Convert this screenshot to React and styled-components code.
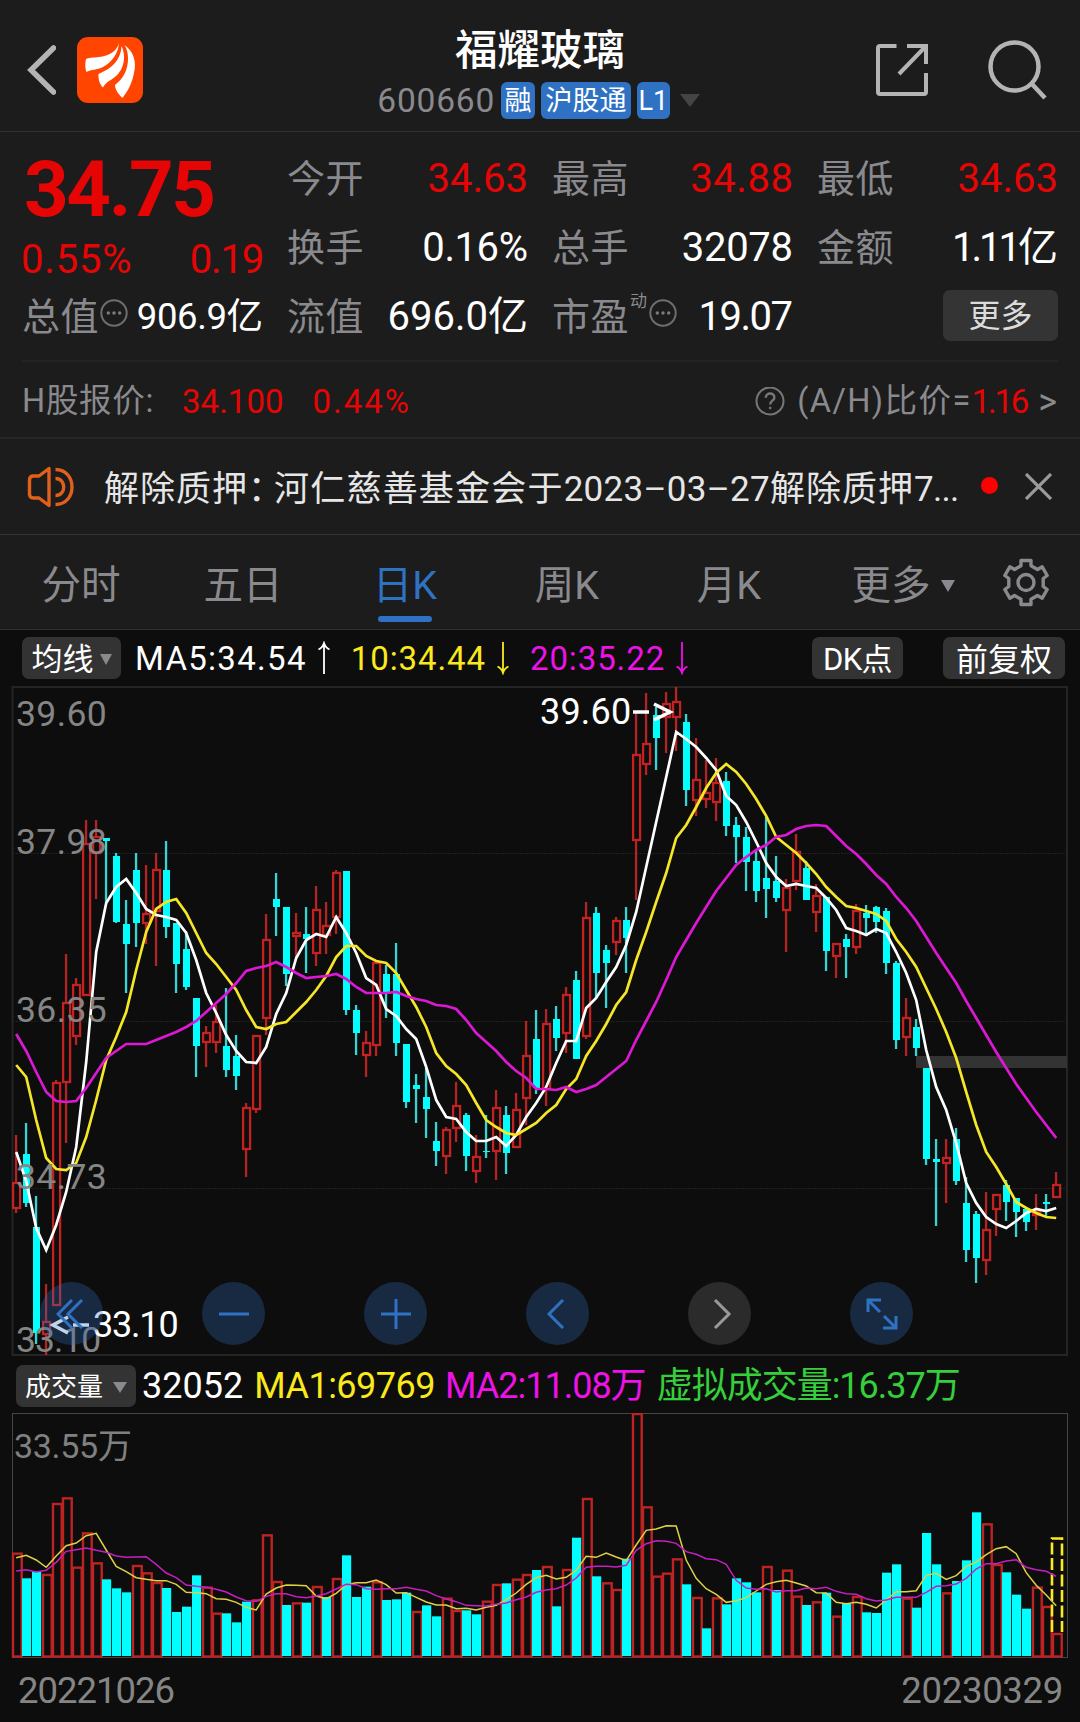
import styled, { createGlobalStyle } from "styled-components";

const GlobalStyle = createGlobalStyle`
  * {
    box-sizing: border-box;
  }
  body {
    margin: 0;
    background: #0d0d0d;
  }
  svg {
    display: block;
    flex-shrink: 0;
  }
`;

const RED = "#e60505";
const YELLOW = "#fbe91c";
const MAGENTA = "#ee12e6";
const GREEN = "#35cf3b";
const GRAY = "#8a8a8e";
const BLUE = "#2f72c4";

const Page = styled.div`
  width: 1080px;
  height: 1722px;
  overflow: hidden;
  background: #1c1c1c;
  color: #fff;
  font-family: Roboto, "Noto Sans CJK SC", sans-serif;
  font-size: 38px;
  line-height: 1;
  white-space: nowrap;
`;

const Text = styled.span`
  font-size: ${(props) => props.$size || 38}px;
  color: ${(props) => props.$color || "#fff"};
  letter-spacing: ${(props) => props.$ls || 0}px;
  margin-left: ${(props) => props.$ml || 0}px;
`;

/* header */

const Header = styled.header`
  display: grid;
  grid-template-columns: 340px 1fr 340px;
  height: 132px;
  border-bottom: 1px solid #303030;
`;

const HeaderLeft = styled.div`
  display: flex;
  align-items: center;
  gap: 21px;
  padding: 8px 0 0 26px;
`;

const HeaderRight = styled.div`
  display: flex;
  align-items: center;
  justify-content: flex-end;
  gap: 59px;
  padding: 8px 32px 0 0;
`;

const Logo = styled.div`
  width: 66px;
  height: 66px;
  border-radius: 11px;
  background: #ff4500;
`;

const TitleBlock = styled.div`
  display: flex;
  flex-direction: column;
  align-items: center;
  padding-top: 26px;
`;

const Title = styled.h1`
  margin: 0;
  font-size: 42.5px;
  font-weight: 500;
  line-height: 50px;
`;

const SubTitle = styled.div`
  display: flex;
  align-items: center;
  height: 37px;
  margin-top: 6px;
  padding-right: 3px;
`;

const Badge = styled.span`
  height: 37px;
  margin-left: 6px;
  padding: 0 ${(props) => props.$pad}px;
  border-radius: 6px;
  background: ${BLUE};
  font-size: 27px;
  line-height: 39px;
`;

const Triangle = styled.i`
  width: 0;
  height: 0;
  margin-left: ${(props) => props.$ml || 0}px;
  border-left: ${(props) => props.$w / 2}px solid transparent;
  border-right: ${(props) => props.$w / 2}px solid transparent;
  border-top: ${(props) => props.$h}px solid ${(props) => props.$color || GRAY};
`;

/* quote */

const Quote = styled.section`
  display: grid;
  grid-template-columns: repeat(4, 240px);
  grid-template-rows: repeat(3, 69px);
  column-gap: 25px;
  height: 230px;
  margin: 0 22px;
  padding: 11px 0 0 1px;
  border-bottom: 2px solid #242424;
`;

const PriceCell = styled.div`
  grid-row: span 2;
  color: ${RED};
`;

const Price = styled.div`
  font-size: 78px;
  font-weight: 700;
  line-height: 94px;
  letter-spacing: -2.4px;
  margin-left: 1px;
`;

const Change = styled.div`
  display: flex;
  justify-content: space-between;
  margin-left: -2px;
  line-height: 46px;
`;

const Cell = styled.div`
  display: flex;
  align-items: center;
  padding-top: 3px;
`;

const Label = styled.span`
  margin-left: -1px;
  color: ${GRAY};
  font-size: 38px;
  letter-spacing: 0.5px;
`;

const Value = styled.span`
  margin-left: auto;
  margin-right: ${(props) => -(props.$ls || 0)}px;
  color: ${(props) => (props.$up ? RED : "#fff")};
  font-size: ${(props) => props.$size || 40}px;
  letter-spacing: ${(props) => props.$ls || 0}px;
`;

const Sup = styled.sup`
  align-self: flex-start;
  margin: 4px 2px 0 1px;
  color: ${GRAY};
  font-size: 17px;
  line-height: 26px;
`;

const MoreButton = styled.button`
  width: 115px;
  height: 51px;
  margin: -4px 0 0 auto;
  padding: 2px 0 0;
  border: 0;
  border-radius: 7px;
  background: #343434;
  color: #dcdcdc;
  font-family: inherit;
  font-size: 32px;
  line-height: 1;
`;

const HShare = styled.section`
  display: flex;
  align-items: center;
  height: 77px;
  padding: 4px 23px 0 22px;
  border-bottom: 2px solid #262626;
`;

const Push = styled.div`
  flex: 1;
`;

const Notice = styled.section`
  display: flex;
  align-items: center;
  height: 96px;
  padding: 0 28px 0 27px;
  border-bottom: 1px solid #333;
`;

const NoticeText = styled.div`
  padding: 3px 0 0 29px;
`;

const RedDot = styled.i`
  width: 17px;
  height: 17px;
  margin: 0 27px 2px auto;
  border-radius: 50%;
  background: #ff0000;
`;

/* tabs */

const Tabs = styled.nav`
  display: grid;
  grid-template-columns: repeat(6, 162px) 108px;
  height: 95px;
  border-bottom: 1px solid #303030;
`;

const Tab = styled.div`
  position: relative;
  display: flex;
  align-items: center;
  justify-content: center;
  padding: ${(props) => (props.$icon ? 2 : 7)}px 0 0 ${(props) => (props.$drop ? 24 : 0)}px;
  color: ${(props) => (props.$active ? BLUE : GRAY)};
  font-size: 39.5px;

  &::after {
    content: "";
    display: ${(props) => (props.$active ? "block" : "none")};
    position: absolute;
    left: 54px;
    bottom: 7px;
    width: 54px;
    height: 6px;
    border-radius: 3px;
    background: ${BLUE};
  }
`;

/* charts */

const Charts = styled.main`
  height: 1092px;
  background: #0d0d0d;
`;

const Legend = styled.div`
  display: flex;
  align-items: center;
  height: ${(props) => props.$h}px;
  padding: ${(props) => props.$pad};
`;

const Chip = styled.button`
  display: flex;
  align-items: center;
  justify-content: center;
  width: ${(props) => props.$w}px;
  height: 42px;
  margin-left: ${(props) => props.$ml || 0}px;
  padding: 3px 0 0;
  border: 0;
  border-radius: 7px;
  background: #333;
  color: #fff;
  font-family: inherit;
  font-size: ${(props) => props.$size || 31}px;
  line-height: 1;
  letter-spacing: ${(props) => props.$ls || 0}px;
`;

const ChartBox = styled.div`
  position: relative;
`;

const Controls = styled.div`
  position: absolute;
  left: 40px;
  bottom: 11px;
  display: flex;
  gap: 99px;
`;

const RoundButton = styled.button`
  display: flex;
  align-items: center;
  justify-content: center;
  width: 63px;
  height: 63px;
  padding: 0;
  border: 0;
  border-radius: 50%;
  background: ${(props) =>
    props.$muted ? "rgba(113, 113, 113, 0.3)" : "rgba(49, 110, 190, 0.3)"};
  color: ${(props) => (props.$muted ? "#999" : BLUE)};
`;

const Dates = styled.footer`
  display: flex;
  justify-content: space-between;
  padding: 14px 17px 0 18px;
`;

// [up, high, body top, body bottom, low]
const candles = [
  [1, 1135, 1182, 1209, 1213], [0, 1123, 1154, 1203, 1207], [0, 1196, 1227, 1333, 1344],
  [1, 1284, 1321, 1335, 1355], [1, 1080, 1082, 1306, 1306], [1, 954, 1002, 1083, 1143],
  [1, 978, 984, 1037, 1045], [1, 820, 843, 996, 996], [1, 820, 836, 854, 899],
  [0, 838, 838, 841, 902], [0, 853, 856, 922, 923], [0, 900, 924, 944, 993],
  [0, 853, 870, 923, 947], [1, 865, 913, 924, 944], [1, 853, 869, 912, 966],
  [0, 841, 870, 927, 938], [0, 923, 923, 964, 993], [0, 931, 949, 987, 990],
  [0, 998, 998, 1046, 1077], [1, 1026, 1032, 1043, 1067], [1, 1005, 1021, 1043, 1053],
  [0, 988, 1046, 1070, 1077], [0, 1035, 1056, 1076, 1090], [1, 1103, 1107, 1150, 1177],
  [1, 1035, 1035, 1110, 1113], [1, 914, 939, 1019, 1035], [0, 873, 899, 907, 936],
  [0, 907, 907, 974, 986], [1, 913, 932, 937, 957], [0, 907, 934, 939, 973],
  [1, 886, 909, 954, 966], [1, 902, 925, 936, 954], [1, 870, 872, 918, 934],
  [0, 871, 871, 1010, 1015], [0, 1005, 1010, 1033, 1055], [1, 1031, 1042, 1056, 1077],
  [1, 962, 962, 1046, 1056], [0, 965, 974, 992, 1018], [0, 943, 974, 1043, 1056],
  [0, 1044, 1044, 1102, 1108], [0, 1074, 1085, 1089, 1123], [0, 1068, 1097, 1109, 1138],
  [0, 1122, 1141, 1151, 1166], [1, 1127, 1129, 1157, 1174], [1, 1082, 1105, 1129, 1142],
  [0, 1113, 1115, 1156, 1171], [1, 1135, 1156, 1172, 1183], [0, 1115, 1151, 1152, 1158],
  [1, 1090, 1107, 1152, 1180], [0, 1106, 1115, 1153, 1174], [1, 1093, 1109, 1148, 1148],
  [1, 1021, 1055, 1099, 1125], [0, 1010, 1039, 1088, 1094], [1, 1009, 1023, 1090, 1106],
  [0, 1006, 1019, 1038, 1051], [1, 987, 994, 1034, 1053], [0, 971, 980, 1059, 1059],
  [1, 902, 917, 1037, 1039], [0, 907, 913, 973, 998], [0, 945, 950, 963, 1008],
  [1, 917, 920, 943, 955], [0, 907, 920, 938, 973], [1, 712, 754, 841, 900],
  [1, 693, 743, 765, 775], [0, 707, 715, 738, 770], [1, 692, 703, 718, 753],
  [1, 687, 701, 718, 751], [0, 714, 722, 790, 806], [1, 738, 779, 801, 816],
  [1, 760, 792, 800, 808], [1, 758, 782, 803, 821], [0, 772, 781, 826, 836],
  [0, 817, 825, 837, 863], [0, 827, 837, 862, 891], [0, 850, 861, 891, 902],
  [0, 817, 878, 889, 918], [0, 856, 881, 898, 902], [1, 879, 887, 911, 952],
  [1, 834, 851, 882, 890], [0, 861, 868, 900, 900], [1, 884, 895, 913, 932],
  [0, 897, 897, 951, 971], [1, 943, 943, 957, 978], [0, 934, 939, 947, 978],
  [1, 904, 910, 948, 954], [0, 905, 913, 918, 935], [0, 906, 907, 922, 933],
  [0, 908, 911, 963, 974], [0, 961, 963, 1040, 1049], [1, 998, 1017, 1038, 1056],
  [0, 1019, 1027, 1048, 1056], [0, 1068, 1068, 1159, 1165], [0, 1139, 1159, 1162, 1226],
  [1, 1139, 1157, 1164, 1203], [0, 1128, 1139, 1181, 1185], [0, 1177, 1203, 1250, 1262],
  [0, 1211, 1214, 1258, 1283], [1, 1192, 1229, 1261, 1275], [1, 1194, 1194, 1210, 1236],
  [0, 1180, 1185, 1202, 1221], [0, 1198, 1198, 1212, 1237], [0, 1209, 1209, 1222, 1231],
  [1, 1194, 1211, 1216, 1230], [0, 1194, 1202, 1204, 1217], [1, 1172, 1184, 1198, 1198],
];

const ma5 = [
  1152, 1181, 1228, 1250, 1225, 1192, 1147, 1062, 952, 903, 887, 879, 893, 909, 915, 917, 920,
  933, 960, 993, 1013, 1035, 1051, 1062, 1063, 1047, 1014, 993, 958, 940, 934, 937, 917, 933,
  953, 978, 985, 1009, 1016, 1029, 1039, 1067, 1100, 1117, 1119, 1132, 1141, 1141, 1137, 1146,
  1135, 1117, 1103, 1087, 1063, 1041, 1041, 1008, 998, 982, 967, 945, 912, 867, 822, 777, 732,
  739, 747, 758, 770, 796, 805, 822, 842, 863, 877, 886, 884, 886, 888, 898, 910, 928, 931, 935,
  929, 933, 952, 973, 1000, 1050, 1087, 1110, 1143, 1183, 1203, 1217, 1224, 1228, 1221, 1213,
  1209, 1211, 1208,
];

const ma10 = [
  1065, 1077, 1120, 1158, 1169, 1170, 1163, 1137, 1100, 1060, 1037, 1012, 970, 932, 909, 902,
  899, 913, 933, 953, 964, 977, 990, 1010, 1027, 1029, 1024, 1022, 1012, 1002, 990, 976, 957,
  946, 946, 956, 961, 963, 973, 990, 1007, 1027, 1053, 1066, 1074, 1085, 1103, 1120, 1127, 1133,
  1135, 1129, 1123, 1113, 1105, 1089, 1079, 1056, 1041, 1024, 1005, 992, 960, 932, 902, 873,
  838, 825, 807, 788, 773, 764, 772, 784, 799, 816, 837, 845, 853, 863, 874, 887, 897, 906, 908,
  911, 914, 921, 939, 952, 967, 988, 1009, 1032, 1058, 1092, 1125, 1152, 1167, 1184, 1202, 1208,
  1213, 1217, 1218,
];

const ma20 = [
  1034, 1051, 1072, 1092, 1101, 1102, 1101, 1088, 1073, 1058, 1051, 1044, 1044, 1044, 1040,
  1036, 1032, 1027, 1021, 1012, 1003, 994, 983, 971, 968, 966, 962, 967, 973, 978, 977, 976,
  974, 979, 987, 993, 993, 993, 992, 996, 999, 1001, 1005, 1006, 1009, 1020, 1033, 1042, 1051,
  1062, 1071, 1078, 1089, 1089, 1090, 1087, 1092, 1089, 1085, 1077, 1069, 1061, 1040, 1021,
  1002, 980, 957, 940, 923, 907, 891, 878, 865, 857, 850, 845, 837, 835, 829, 826, 825, 826,
  836, 846, 854, 864, 875, 884, 897, 908, 921, 937, 953, 968, 983, 1001, 1018, 1035, 1052, 1068,
  1084, 1098, 1112, 1125, 1138,
];

// the volume series count down from the top of the panel, three units a pixel
const volumes = [
  608, 685, 665, 672, 459, 442, 650, 547, 637, 688, 715, 727, 645, 667, 696, 714, 786, 770, 676,
  710, 788, 790, 817, 755, 748, 553, 693, 765, 757, 758, 708, 741, 684, 616, 741, 710, 694, 750,
  748, 728, 783, 766, 799, 743, 780, 781, 793, 752, 702, 700, 686, 672, 660, 648, 769, 657, 563,
  444, 679, 697, 717, 626, 189, 469, 677, 668, 625, 703, 741, 835, 742, 763, 685, 697, 727, 648,
  720, 659, 737, 765, 754, 728, 797, 762, 738, 787, 789, 668, 643, 743, 773, 549, 643, 727, 693,
  631, 487, 520, 642, 667, 734, 776, 710, 768, 849,
];

// close against the previous close: r is up, c is down
const volumeSides =
  "rccrrrrrrc" +
  "ccrrrccccr" +
  "rcccrrrcrc" +
  "rcrcccrccc" +
  "rccrrccrrc" +
  "rrcrcrcrcr" +
  "rcrrrrrcrc" +
  "rccccrcrrc" +
  "rcrcrccccr" +
  "cccrcccrrc" +
  "ccrrr";

const volMa1 = [
  623, 616, 630, 652, 618, 587, 579, 557, 550, 600, 649, 665, 683, 688, 692, 692, 703, 727, 728,
  731, 746, 748, 757, 772, 780, 732, 714, 705, 706, 707, 738, 746, 730, 704, 698, 698, 690, 704,
  729, 728, 742, 756, 765, 765, 776, 775, 780, 772, 766, 749, 729, 703, 683, 676, 687, 682, 661,
  619, 622, 609, 621, 632, 585, 541, 537, 527, 528, 630, 685, 716, 733, 757, 752, 743, 723, 703,
  695, 691, 699, 708, 728, 729, 757, 761, 757, 763, 774, 750, 725, 725, 722, 676, 670, 688, 677,
  649, 636, 614, 596, 590, 611, 668, 706, 735, 767,
];

const volMa2 = [
  663, 659, 666, 661, 637, 604, 599, 594, 601, 607, 618, 622, 621, 620, 643, 669, 683, 705, 709,
  712, 718, 726, 741, 752, 754, 739, 731, 731, 740, 743, 738, 731, 717, 703, 704, 716, 718, 716,
  716, 712, 718, 723, 737, 747, 755, 766, 767, 768, 763, 759, 749, 741, 727, 720, 716, 705, 684,
  652, 649, 649, 651, 646, 601, 581, 572, 574, 580, 605, 613, 626, 629, 643, 691, 714, 718, 716,
  726, 722, 722, 714, 716, 712, 724, 731, 733, 746, 753, 750, 742, 742, 742, 727, 709, 707, 702,
  685, 657, 641, 641, 633, 629, 652, 659, 664, 679,
];

const volY = (v) => 1350 + v / 3;

const toPoints = (series, fn = (v) => v) =>
  series.map((v, i) => `${16.2 + i * 10},${fn(v)}`).join(" ");

const Candle = ({ index, data }) => {
  const [up, high, top, bottom, low] = data;
  const x = 16 + index * 10;
  return (
    <g>
      <rect x={x - 1.1} y={high} width="2.3" height={low - high} fill={up ? "#b52424" : "#38d4d4"} />
      {up ? (
        <rect
          x={x - 2.9}
          y={top + 1}
          width="7"
          height={Math.max(bottom - top - 2, 1)}
          fill="#0d0d0d"
          stroke="#c42121"
          strokeWidth="2.3"
        />
      ) : (
        <rect x={x - 3} y={top} width="7" height={bottom - top} fill="#00ffff" />
      )}
    </g>
  );
};

const PriceChart = () => (
  <svg width="1080" height="670" viewBox="0 686 1080 670">
    <rect x="12.5" y="687" width="1054.5" height="668" fill="none" stroke="#252525" strokeWidth="2" />
    {[853.5, 1021.5, 1188.5].map((y) => (
      <line key={y} x1="13" x2="1067" y1={y} y2={y} stroke="#202020" strokeDasharray="2 1" />
    ))}
    <rect x="916" y="1056" width="151" height="12" fill="#333" />
    {candles.map((data, i) => (
      <Candle key={i} index={i} data={data} />
    ))}
    <polyline points={toPoints(ma5)} fill="none" stroke="#fff" strokeWidth="2.7" />
    <polyline points={toPoints(ma10)} fill="none" stroke="#f5e628" strokeWidth="2.7" />
    <polyline points={toPoints(ma20)} fill="none" stroke="#dc18d4" strokeWidth="2.7" />
    <g fill="#858585" fontSize="35.5" letterSpacing="0.4">
      <text x="16" y="726">39.60</text>
      <text x="16" y="854">37.98</text>
      <text x="16" y="1022">36.35</text>
      <text x="16" y="1189">34.73</text>
      <text x="16" y="1352" letterSpacing="-1">33.10</text>
    </g>
    <g fill="#fff" fontSize="36" letterSpacing="0.2">
      <text x="540" y="724">39.60</text>
      <text x="93" y="1337" letterSpacing="-1.2">33.10</text>
    </g>
    <g fill="none" stroke="#fff" strokeWidth="3.600">
      <path d="M633 712h16M654 704l16 8-16 8" />
      <path d="M89 1325h-16M68 1317l-15 8 15 8" />
    </g>
  </svg>
);

const VolumeChart = () => (
  <svg width="1080" height="246" viewBox="0 1413 1080 246">
    <rect x="12.5" y="1413.5" width="1055" height="244" fill="none" stroke="#454545" />
    {volumes.map((v, i) => {
      const y = volY(v);
      return volumeSides[i] === "r" ? (
        <rect
          key={i}
          x={13 + i * 10}
          y={y + 1}
          width="8.700"
          height={1655.5 - y}
          fill="none"
          stroke="#bd2323"
          strokeWidth="2.400"
        />
      ) : (
        <rect key={i} x={12 + i * 10} y={y} width="9.200" height={1656 - y} fill="#00ffff" />
      );
    })}
    <path
      d="M1052 1632V1538.500H1062V1632"
      fill="none"
      stroke={YELLOW}
      strokeWidth="2.600"
      strokeDasharray="12 3.500"
    />
    <polyline points={toPoints(volMa1, volY)} fill="none" stroke="#dfd145" strokeWidth="1.500" />
    <polyline points={toPoints(volMa2, volY)} fill="none" stroke="#c51fc0" strokeWidth="1.500" />
    <text x="14" y="1458" fill="#808080" fontSize="34" letterSpacing="-0.3">
      33.55万
    </text>
  </svg>
);

const LogoMark = () => (
  <svg width="66" height="66" viewBox="0 0 66 66" fill="#fff">
    <path d="M42 6C40 14 32 19 22 20c-6 .5-11 1-13 2-1 4-1 9 .3 13C14 32.500 20 33 26 30 35 25 41 17 42 6z" />
    <path d="M44.500 9C44 22 36 31 21.500 37c-.5 5 1.500 11 4.500 13.500 3-5.500 8-7.500 12-10.500 10-8 11-22 6.500-31z" />
    <path d="M47.500 8C56 14 60 24 57 36c-2 10-6 18-11.500 25C41 57 38 52 38 48c8-6 13-15 13-26 0-6-1-10-3.500-14z" />
  </svg>
);

const DotsIcon = ({ ml = 0 }) => (
  <svg width="28" height="28" viewBox="0 0 28 28" style={{ marginLeft: ml, marginTop: -8 }}>
    <circle cx="14" cy="14" r="12.700" fill="none" stroke="#6e6e6e" strokeWidth="2" />
    <g fill="#7c7c7c">
      <circle cx="8.300" cy="14" r="1.700" />
      <circle cx="14" cy="14" r="1.700" />
      <circle cx="19.700" cy="14" r="1.700" />
    </g>
  </svg>
);

const HelpIcon = () => (
  <svg width="30" height="30" viewBox="0 0 30 30" fill="none" stroke="#77777a" strokeWidth="2">
    <circle cx="15" cy="14" r="13.500" />
    <path d="M10.800 10.800c0-5.600 8.600-5.600 8.600-.4 0 3.200-4.200 3.400-4.200 7" strokeWidth="2.400" />
    <circle cx="15.200" cy="21" r="1" fill="#77777a" strokeWidth="1" />
  </svg>
);

const SpeakerIcon = () => (
  <svg width="48" height="42" viewBox="0 0 48 42" fill="none" stroke="#e0601c" strokeWidth="3.400">
    <path d="M22 2.500v37L12 32H6.500C4 32 2.500 30.500 2.500 28V14C2.500 11.500 4 10 6.500 10H12z" strokeLinejoin="round" />
    <path d="M28.500 12.500c11 0 11 17 0 17M28.500 3.500c22 0 22 35 0 35" />
  </svg>
);

const GearIcon = () => (
  <svg width="48" height="50" viewBox="0 0 48 50" fill="none" stroke={GRAY} strokeWidth="3.400">
    <path d="M19 2.500h10v5.200l6.500 3.800 4.700-2.700 5 8.700-4 3v8l4 3-5 8.700-4.700-2.700-6.500 3.800v5.200H19v-5.200l-6.500-3.800-4.700 2.700-5-8.700 4-3v-8l-4-3 5-8.700 4.700 2.700L19 7.700z" strokeLinejoin="round" />
    <circle cx="24" cy="24.500" r="8" />
  </svg>
);

const TrendArrow = ({ up, color, ml }) => (
  <svg
    width="14"
    height="34"
    viewBox="0 0 14 34"
    fill="none"
    stroke={color}
    strokeWidth="1.800"
    style={{ marginLeft: ml, transform: up ? "none" : "scaleY(-1)" }}
  >
    <path d="M7 2v31M1.500 8.500C4 7.500 6 5 7 2c1 3 3 5.500 5.500 6.500" />
  </svg>
);

const controls = [
  { name: "first", d: "M16 2L2 16l14 14M26 2L12 16l14 14" },
  { name: "out", d: "M1 16h30" },
  { name: "in", d: "M1 16h30M16 1v30" },
  { name: "prev", d: "M21 2L7 16l14 14" },
  { name: "next", d: "M11 2l14 14-14 14", muted: true },
  { name: "full", d: "M2 14V2h13M2 2l12 12M30 18v12H17M30 30L18 18" },
];

const tabs = ["分时", "五日", "日K", "周K", "月K"];

export default function App() {
  return (
    <Page>
      <GlobalStyle />
      <Header>
        <HeaderLeft>
          <svg width="30" height="52" viewBox="0 0 30 52" fill="none" stroke="#b4b4b4" strokeWidth="5.500">
            <path d="M27.500 4L5 26l22.500 22" strokeLinecap="round" />
          </svg>
          <Logo>
            <LogoMark />
          </Logo>
        </HeaderLeft>
        <TitleBlock>
          <Title>福耀玻璃</Title>
          <SubTitle>
            <Text $size={33.5} $color={GRAY} $ls={0.8}>600660</Text>
            <Badge $pad={3.5}>融</Badge>
            <Badge $pad={4.5}>沪股通</Badge>
            <Badge $pad={1.5}>L1</Badge>
            <Triangle $w={20} $h={13} $ml={10} $color="#444" />
          </SubTitle>
        </TitleBlock>
        <HeaderRight>
          <svg width="54" height="54" viewBox="0 0 54 54" fill="none" stroke="#b4b4b4" strokeWidth="4">
            <path d="M21.500 3H5Q3 3 3 5v44q0 2 2 2h44q2 0 2-2V30M32 3h19v18M51 3L24 31" />
          </svg>
          <svg width="60" height="60" viewBox="0 0 60 60" fill="none" stroke="#b4b4b4" strokeWidth="4.500">
            <circle cx="26.500" cy="26.500" r="24" />
            <path d="M43.500 43.500L57 58" />
          </svg>
        </HeaderRight>
      </Header>

      <Quote>
        <PriceCell>
          <Price>34.75</Price>
          <Change>
            <Text $size={40} $color={RED} $ls={0.8}>0.55%</Text>
            <Text $size={40} $color={RED} $ls={-1.2}>0.19</Text>
          </Change>
        </PriceCell>
        <Cell><Label>今开</Label><Value $up>34.63</Value></Cell>
        <Cell><Label>最高</Label><Value $up $ls={0.6}>34.88</Value></Cell>
        <Cell><Label>最低</Label><Value $up>34.63</Value></Cell>
        <Cell><Label>换手</Label><Value $ls={-0.4}>0.16%</Value></Cell>
        <Cell><Label>总手</Label><Value $ls={-0.3}>32078</Value></Cell>
        <Cell><Label>金额</Label><Value $ls={-3}>1.11亿</Value></Cell>
        <Cell>
          <Label>总值</Label>
          <DotsIcon ml={1} />
          <Value $size={36.5} $ls={-0.4}>906.9亿</Value>
        </Cell>
        <Cell><Label>流值</Label><Value>696.0亿</Value></Cell>
        <Cell>
          <Label>市盈</Label>
          <Sup>动</Sup>
          <DotsIcon />
          <Value $ls={-1.5}>19.07</Value>
        </Cell>
        <Cell><MoreButton>更多</MoreButton></Cell>
      </Quote>

      <HShare>
        <Text $size={32.5} $color={GRAY} $ls={0.7}>H股报价:</Text>
        <Text $size={33} $color={RED} $ml={28}>34.100</Text>
        <Text $size={33} $color={RED} $ml={29} $ls={2}>0.44%</Text>
        <Push />
        <HelpIcon />
        <Text $size={32.5} $color={GRAY} $ls={1.4} $ml={12}>(A/H)比价=</Text>
        <Text $size={33} $color={RED} $ls={-2.2}>1.16</Text>
        <Text $size={36} $color={GRAY} $ml={11}>&gt;</Text>
      </HShare>

      <Notice>
        <SpeakerIcon />
        <NoticeText>
          <Text $size={35} $color="#e6e6e6" $ls={1}>解除质押</Text>
          <Text $size={35} $color="#e6e6e6" $ls={-9}>：</Text>
          <Text $size={35} $color="#e6e6e6" $ls={1.2}>河仁慈善基金会于</Text>
          <Text $size={35} $color="#e6e6e6" $ls={0.3}>2023–03–27</Text>
          <Text $size={35} $color="#e6e6e6" $ls={1}>解除质押</Text>
          <Text $size={35} $color="#e6e6e6" $ls={-0.7}>7...</Text>
        </NoticeText>
        <RedDot />
        <svg width="27" height="27" viewBox="0 0 27 27" stroke="#9a9a9a" strokeWidth="3.200">
          <path d="M1 1l25 25M26 1L1 26" />
        </svg>
      </Notice>

      <Tabs>
        {tabs.map((name) => (
          <Tab key={name} $active={name === "日K"}>{name}</Tab>
        ))}
        <Tab $drop>
          更多
          <Triangle $w={14} $h={12} $ml={10} />
        </Tab>
        <Tab $icon>
          <GearIcon />
        </Tab>
      </Tabs>

      <Charts>
        <Legend $h={56} $pad="0 15px 0 22px">
          <Chip $w={99}>
            均线
            <Triangle $w={13} $h={11} $ml={6} />
          </Chip>
          <Text $size={33} $ls={1.3} $ml={14}>MA5:34.54</Text>
          <TrendArrow up color="#fff" ml={10} />
          <Text $size={33} $color={YELLOW} $ls={0.9} $ml={20}>10:34.44</Text>
          <TrendArrow color={YELLOW} ml={10} />
          <Text $size={33} $color={MAGENTA} $ls={0.9} $ml={20}>20:35.22</Text>
          <TrendArrow color={MAGENTA} ml={10} />
          <Push />
          <Chip $w={91} $ls={-0.6}>DK点</Chip>
          <Chip $w={122} $ml={40} $size={32}>前复权</Chip>
        </Legend>
        <ChartBox>
          <PriceChart />
          <Controls>
            {controls.map(({ name, d, muted }) => (
              <RoundButton key={name} $muted={muted}>
                <svg width="32" height="32" viewBox="0 0 32 32" fill="none" stroke="currentColor" strokeWidth="3">
                  <path d={d} />
                </svg>
              </RoundButton>
            ))}
          </Controls>
        </ChartBox>
        <Legend $h={57} $pad="2px 0 0 16px">
          <Chip $w={120} $size={26}>
            成交量
            <Triangle $w={14} $h={11} $ml={10} />
          </Chip>
          <Text $size={36} $ml={6}>32052</Text>
          <Text $size={36} $color={YELLOW} $ls={-0.5} $ml={11}>MA1:69769</Text>
          <Text $size={36} $color={MAGENTA} $ls={-1} $ml={10}>MA2:11.08万</Text>
          <Text $size={36} $color={GREEN} $ls={-1} $ml={11}>虚拟成交量:16.37万</Text>
        </Legend>
        <VolumeChart />
        <Dates>
          <Text $size={36.5} $color="#858585" $ls={-1}>20221026</Text>
          <Text $size={36.5} $color="#858585" $ls={-0.3}>20230329</Text>
        </Dates>
      </Charts>
    </Page>
  );
}
